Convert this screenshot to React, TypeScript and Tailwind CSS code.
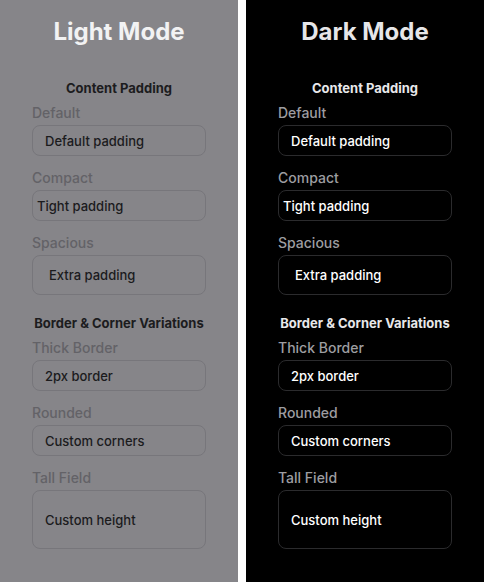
import React from "react";

type Theme = "light" | "dark";

function Field({
  theme,
  label,
  text,
  pad,
  h,
  extra = "",
}: {
  theme: Theme;
  label: string;
  text: string;
  pad: string;
  h: string;
  extra?: string;
}) {
  const light = theme === "light";
  return (
    <div className="flex flex-col">
      <div
        className={
          "text-[14px] font-medium leading-[18px] mb-[3px] " +
          (light ? "text-[#636267]" : "text-[#9d9da1]")
        }
      >
        {label}
      </div>
      <div
        className={
          "box-border flex items-center rounded-lg border " +
          pad +
          " " +
          h +
          " " +
          extra +
          " " +
          (light ? "border-[#77767b] text-[#1b1b1d]" : "border-[#2b2b2d] text-white")
        }
      >
        <span className="text-[13px] font-medium leading-4">{text}</span>
      </div>
    </div>
  );
}

function Pane({ theme }: { theme: Theme }) {
  const light = theme === "light";
  const head =
    "text-center text-[13px] font-bold leading-4 " +
    (light ? "text-[#1c1c1e]" : "text-[#e8e8ea]");
  return (
    <div
      className={
        "w-[238px] h-[582px] px-8 pt-4 flex flex-col " +
        (light ? "bg-[#868589]" : "bg-black")
      }
    >
      <div
        className={
          "text-center text-2xl font-bold leading-8 " +
          (light ? "text-[#f2f2f3]" : "text-[#e6e6e8]")
        }
      >
        {light ? "Light Mode" : "Dark Mode"}
      </div>
      <div className={head + " mt-8 mb-2"}>Content Padding</div>
      <div className="flex flex-col gap-[13px]">
        <Field theme={theme} label="Default" text="Default padding" pad="px-3" h="h-[31px]" />
        <Field theme={theme} label="Compact" text="Tight padding" pad="px-1" h="h-[31px]" />
        <Field theme={theme} label="Spacious" text="Extra padding" pad="px-4" h="h-[40px]" />
      </div>
      <div className={head + " mt-5 mb-2"}>Border &amp; Corner Variations</div>
      <div className="flex flex-col gap-[13px]">
        <Field theme={theme} label="Thick Border" text="2px border" pad="px-3" h="h-[31px]" />
        <Field theme={theme} label="Rounded" text="Custom corners" pad="px-3" h="h-[31px]" extra="rounded-[10px]" />
        <Field theme={theme} label="Tall Field" text="Custom height" pad="px-3" h="h-[59px]" />
      </div>
    </div>
  );
}

export default function App() {
  return (
    <div
      className="flex gap-2 bg-white w-[484px] h-[582px] overflow-hidden"
      style={{ fontFamily: "Inter, 'Noto Sans', sans-serif" }}
    >
      <Pane theme="light" />
      <Pane theme="dark" />
    </div>
  );
}
